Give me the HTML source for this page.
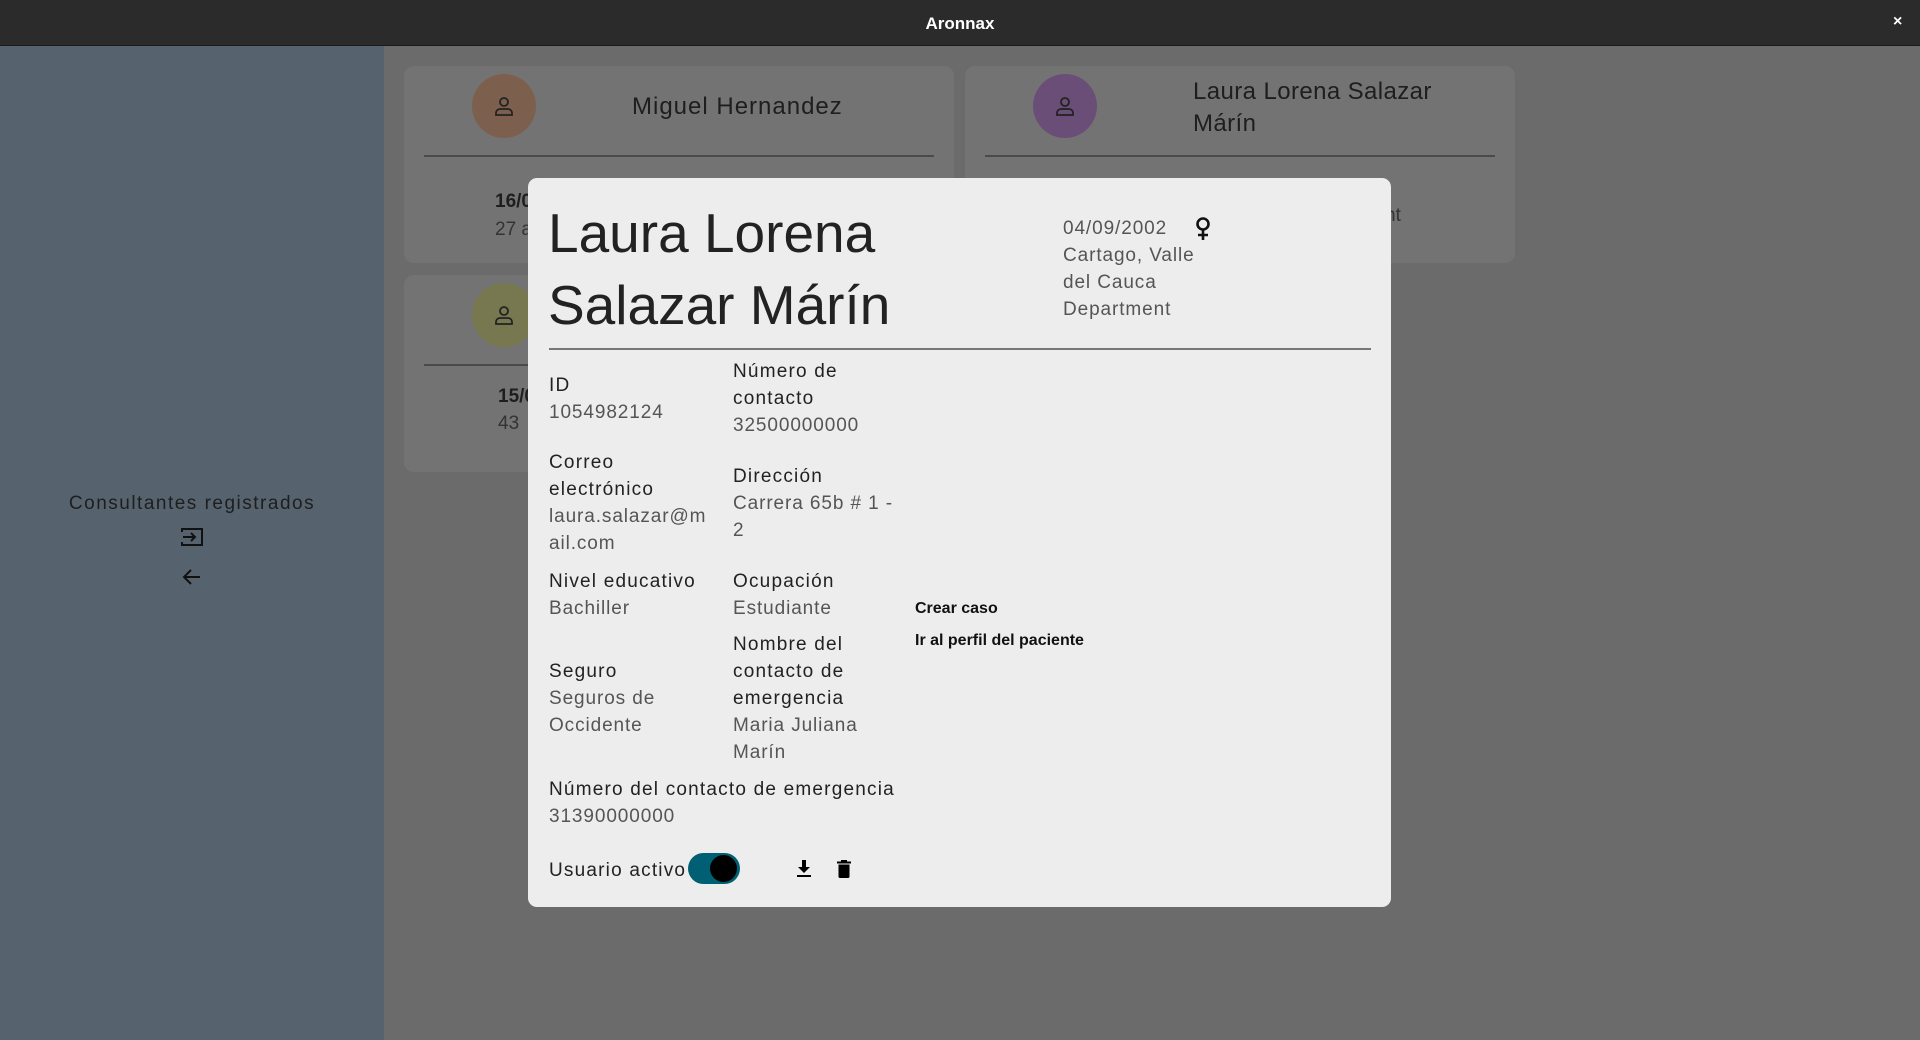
<!DOCTYPE html>
<html><head><meta charset="utf-8"><style>
*{margin:0;padding:0;box-sizing:border-box}
body{width:1920px;height:1040px;overflow:hidden;background:#6b6b6b;font-family:"Liberation Sans",sans-serif;position:relative}
.abs{position:absolute;white-space:nowrap}
.title{position:absolute;left:0;top:0;width:1920px;height:46px;background:#2b2b2b;border-bottom:1px solid #1a1a1a}
.side{position:absolute;left:0;top:46px;width:384px;height:994px;background:#56626e}
.card{position:absolute;background:#737373;border-radius:10px;width:550px}
.av{position:absolute;width:64px;height:64px;border-radius:50%}
.hr{position:absolute;height:2px;background:#4a4a4a}
.modal{position:absolute;left:528px;top:178px;width:863px;height:729px;background:#ededed;border-radius:9px}
.l{position:absolute;font-size:19px;color:#222;line-height:27px;white-space:nowrap;letter-spacing:1.2px}
.v{color:#555;letter-spacing:0.9px}
</style></head><body>
<div class="title"></div>
<div class="abs" style="left:0;width:1920px;text-align:center;top:14px;color:#fff;font-weight:bold;font-size:17px">Aronnax</div>
<div class="abs" style="left:1893px;top:13px;color:#fff;font-size:16px;font-weight:bold">×</div>
<div class="side"></div>
<div class="abs" style="left:0;width:384px;text-align:center;top:493px;font-size:19px;color:#1e1e1e;letter-spacing:1.5px">Consultantes registrados</div>
<svg class="abs" style="left:180px;top:527px" width="24" height="20" viewBox="0 0 24 20"><path d="M2 5V2h20v16H2v-3" fill="none" stroke="#111" stroke-width="2"/><path d="M3 10h11M11 6l4 4-4 4" fill="none" stroke="#111" stroke-width="2"/></svg>
<svg class="abs" style="left:182px;top:568px" width="20" height="18" viewBox="0 0 20 18"><path d="M18 9H3M9 2L2 9l7 7" fill="none" stroke="#111" stroke-width="2"/></svg>

<div class="card" style="left:404px;top:66px;height:197px"></div>
<div class="card" style="left:965px;top:66px;height:197px"></div>
<div class="card" style="left:404px;top:275px;height:197px"></div>
<div class="av" style="left:472px;top:74px;background:#7d5f4d"></div>
<div class="av" style="left:1033px;top:74px;background:#6b4e78"></div>
<div class="av" style="left:472px;top:283px;background:#787850"></div>
<svg class="abs" style="left:492px;top:94px" width="24" height="24" viewBox="0 0 24 24"><circle cx="12" cy="8" r="4" fill="none" stroke="#222" stroke-width="1.8"/><path d="M4 21v-2a4 4 0 0 1 4-4h8a4 4 0 0 1 4 4v2z" fill="none" stroke="#222" stroke-width="1.8"/></svg>
<svg class="abs" style="left:1053px;top:94px" width="24" height="24" viewBox="0 0 24 24"><circle cx="12" cy="8" r="4" fill="none" stroke="#222" stroke-width="1.8"/><path d="M4 21v-2a4 4 0 0 1 4-4h8a4 4 0 0 1 4 4v2z" fill="none" stroke="#222" stroke-width="1.8"/></svg>
<svg class="abs" style="left:492px;top:303px" width="24" height="24" viewBox="0 0 24 24"><circle cx="12" cy="8" r="4" fill="none" stroke="#222" stroke-width="1.8"/><path d="M4 21v-2a4 4 0 0 1 4-4h8a4 4 0 0 1 4 4v2z" fill="none" stroke="#222" stroke-width="1.8"/></svg>
<div class="abs" style="left:632px;top:93px;font-size:24px;color:#1e1e1e;letter-spacing:1px">Miguel Hernandez</div>
<div class="abs" style="left:1193px;top:76px;font-size:24px;color:#1e1e1e;line-height:32px;letter-spacing:0.4px">Laura Lorena Salazar<br>Márín</div>
<div class="hr" style="left:424px;top:155px;width:510px"></div>
<div class="hr" style="left:985px;top:155px;width:510px"></div>
<div class="hr" style="left:424px;top:364px;width:110px"></div>
<div class="abs" style="left:495px;top:191px;font-size:19px;color:#1e1e1e;font-weight:bold">16/0</div>
<div class="abs" style="left:495px;top:219px;font-size:19px;color:#333">27 a</div>
<div class="abs" style="left:498px;top:386px;font-size:19px;color:#1e1e1e;font-weight:bold">15/0</div>
<div class="abs" style="left:498px;top:413px;font-size:19px;color:#333">43</div>
<div class="abs" style="left:1385px;top:205px;font-size:19px;color:#333">nt</div>

<div class="modal"></div>
<div class="abs" style="left:548px;top:197px;font-size:55px;line-height:72px;color:#222">Laura Lorena<br>Salazar Márín</div>
<div class="l v" style="left:1063px;top:215px">04/09/2002<br>Cartago, Valle<br>del Cauca<br>Department</div>
<svg class="abs" style="left:1194px;top:216px" width="18" height="26" viewBox="0 0 18 26"><circle cx="9" cy="8" r="5.5" fill="none" stroke="#111" stroke-width="2.6"/><path d="M9 13v11M4 19h10" stroke="#111" stroke-width="2.6"/></svg>
<div class="hr" style="left:549px;top:348px;width:822px;background:#777"></div>

<div class="l" style="left:549px;top:372px">ID<br><span class="v">1054982124</span></div>
<div class="l" style="left:733px;top:358px">Número de<br>contacto<br><span class="v">32500000000</span></div>
<div class="l" style="left:549px;top:449px">Correo<br>electrónico<br><span class="v">laura.salazar@m<br>ail.com</span></div>
<div class="l" style="left:733px;top:463px">Dirección<br><span class="v">Carrera 65b # 1 -<br>2</span></div>
<div class="l" style="left:549px;top:568px">Nivel educativo<br><span class="v">Bachiller</span></div>
<div class="l" style="left:733px;top:568px">Ocupación<br><span class="v">Estudiante</span></div>
<div class="abs" style="left:915px;top:600px;font-size:16px;font-weight:bold;color:#111">Crear caso</div>
<div class="abs" style="left:915px;top:632px;font-size:16px;font-weight:bold;color:#111">Ir al perfil del paciente</div>
<div class="l" style="left:549px;top:658px">Seguro<br><span class="v">Seguros de<br>Occidente</span></div>
<div class="l" style="left:733px;top:631px">Nombre del<br>contacto de<br>emergencia<br><span class="v">Maria Juliana<br>Marín</span></div>
<div class="l" style="left:549px;top:776px">Número del contacto de emergencia<br><span class="v">31390000000</span></div>
<div class="l" style="left:549px;top:857px">Usuario activo</div>
<div class="abs" style="left:688px;top:853px;width:52px;height:31px;border-radius:16px;background:#005f73"></div>
<div class="abs" style="left:710px;top:855px;width:27px;height:27px;border-radius:50%;background:#000"></div>
<svg class="abs" style="left:796px;top:860px" width="16" height="18" viewBox="0 0 16 18"><path d="M6 0h4v7h4l-6 6-6-6h4z" fill="#000"/><rect x="1" y="15" width="14" height="2" fill="#000"/></svg>
<svg class="abs" style="left:837px;top:860px" width="14" height="18" viewBox="0 0 14 18"><rect x="0" y="1.5" width="14" height="2" fill="#000"/><rect x="4" y="0" width="6" height="2" fill="#000"/><path d="M1.5 4.5h11v12a1.5 1.5 0 0 1-1.5 1.5H3a1.5 1.5 0 0 1-1.5-1.5z" fill="#000"/></svg>
</body></html>
